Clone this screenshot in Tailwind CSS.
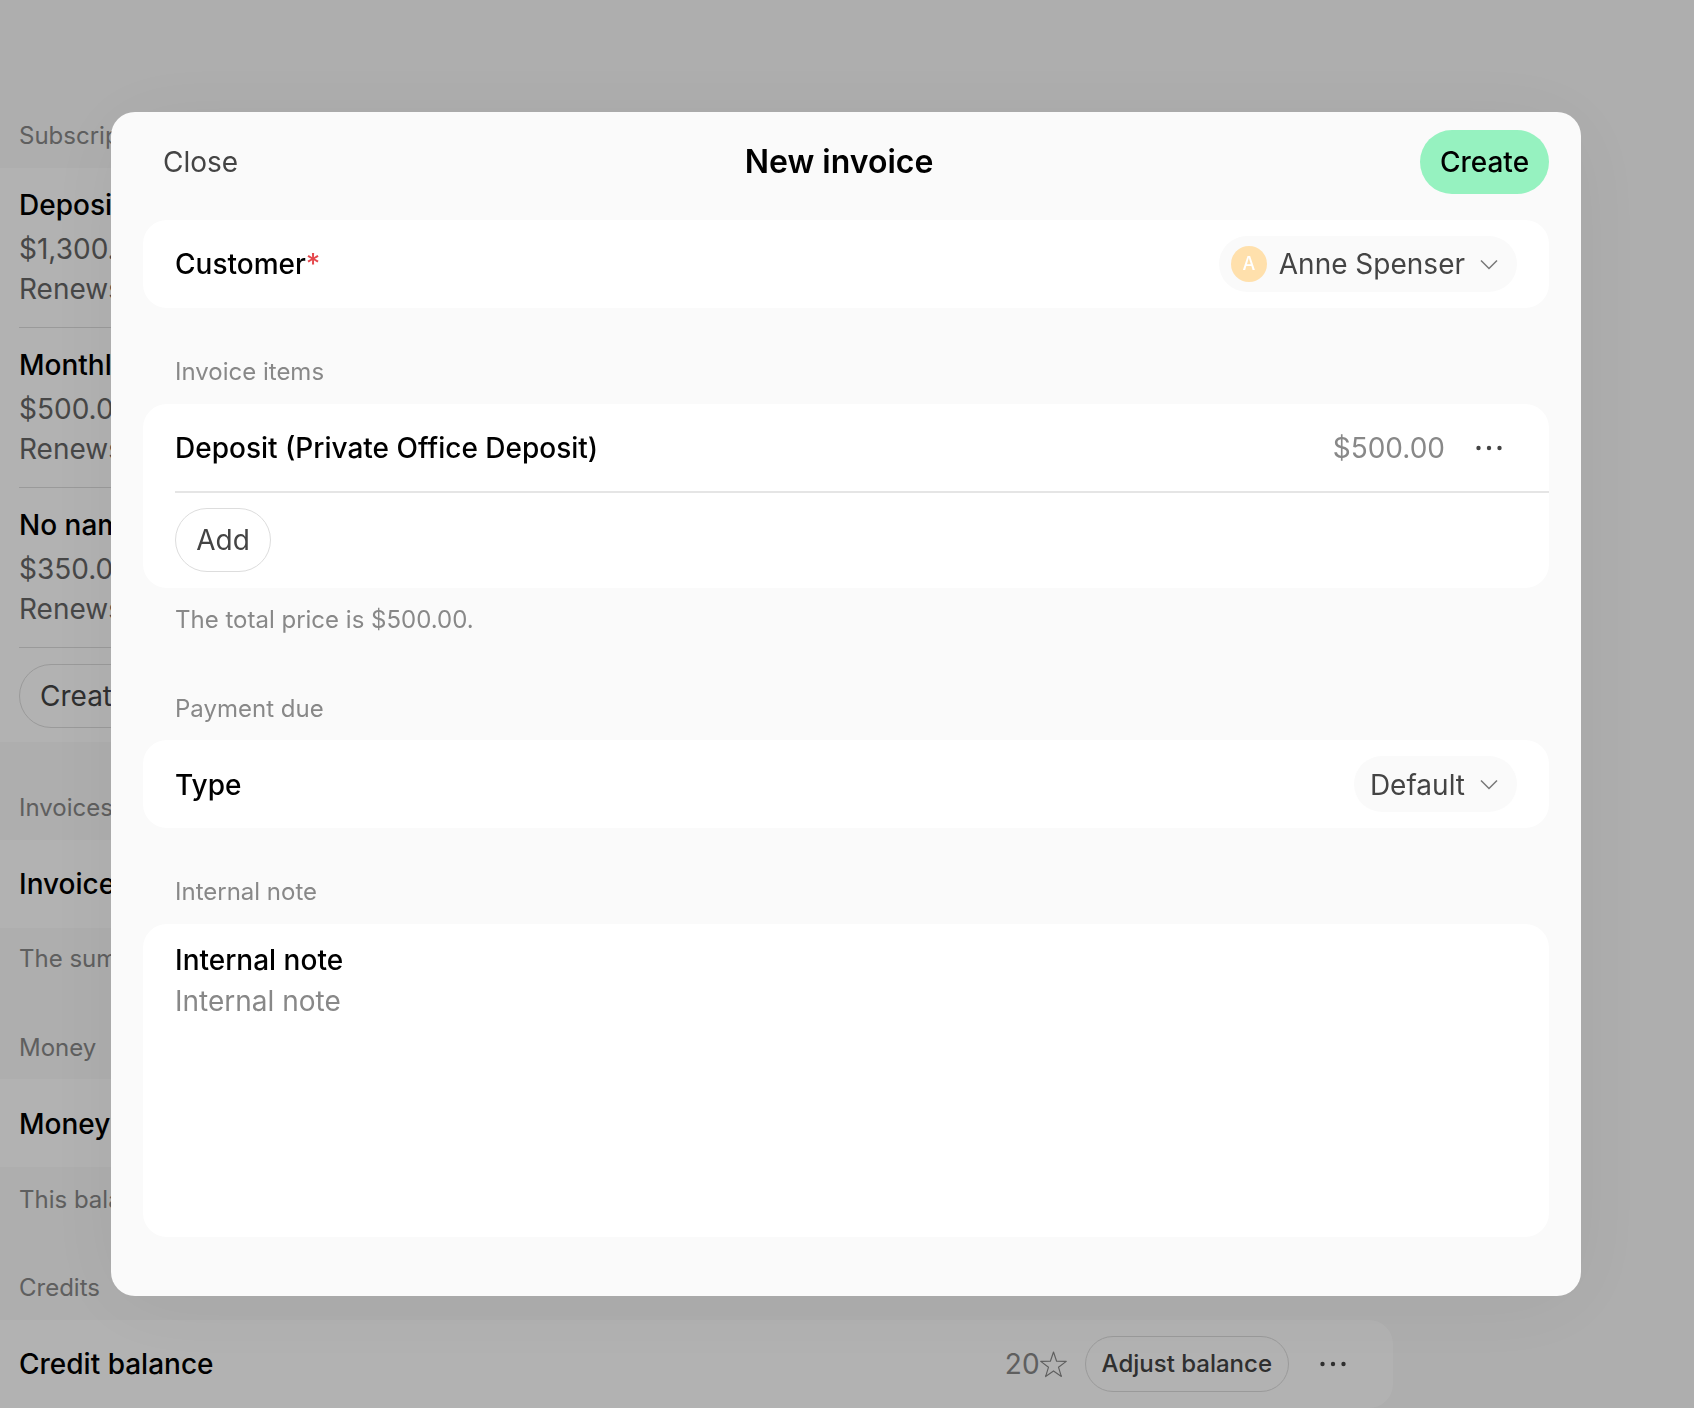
<!DOCTYPE html>
<html lang="en">
<head>
<meta charset="utf-8">
<title>New invoice</title>
<script src="https://cdn.jsdelivr.net/npm/@tailwindcss/browser@4"></script>
</head>
<body class="m-0 h-[1408px] overflow-hidden bg-[#f9f9f9] font-[Inter,sans-serif] text-[28px] leading-[40px] text-black">
<main class="w-[1393px] pt-[116px]">
  <h2 class="pl-[19px] text-[24px] leading-[40px] text-[#888]">Subscriptions</h2>
  <section class="mt-[12px] flex h-[574px] flex-col rounded-r-[24px] bg-white pl-[19px]">
    <div class="flex h-[160px] flex-col justify-end border-b border-[#ddd] pb-[18px]">
      <div class="mb-[4px] font-medium">Deposit</div><div class="text-[#666]">$1,300.00</div><div class="text-[#666]">Renews on the 1st</div>
    </div>
    <div class="flex h-[160px] flex-col justify-end border-b border-[#ddd] pb-[18px]">
      <div class="mb-[4px] font-medium">Monthly</div><div class="text-[#666]">$500.00</div><div class="text-[#666]">Renews on the 1st</div>
    </div>
    <div class="flex h-[160px] flex-col justify-end border-b border-[#ddd] pb-[18px]">
      <div class="mb-[4px] font-medium">No name</div><div class="text-[#666]">$350.00</div><div class="text-[#666]">Renews on the 1st</div>
    </div>
    <div class="mt-[16px]"><button class="h-[64px] rounded-full border border-[#ddd] px-[20px] text-[#444]">Create subscription</button></div>
  </section>
  <h2 class="mt-[46px] pl-[19px] text-[24px] leading-[40px] text-[#888]">Invoices</h2>
  <section class="mt-[12px] flex h-[88px] items-center rounded-r-[24px] bg-white pl-[19px] font-medium">Invoices</section>
  <p class="mt-[11px] pl-[19px] text-[24px] leading-[40px] text-[#888]">The sum of all invoices</p>
  <h2 class="mt-[49px] pl-[19px] text-[24px] leading-[40px] text-[#888]">Money</h2>
  <section class="mt-[11px] flex h-[88px] items-center rounded-r-[24px] bg-white pl-[19px] pt-[2px] font-medium">Money balance</section>
  <p class="mt-[13px] pl-[19px] text-[24px] leading-[40px] text-[#888]">This balance is available</p>
  <h2 class="mt-[48px] pl-[19px] text-[24px] leading-[40px] text-[#888]">Credits</h2>
  <section class="mt-[12px] flex h-[88px] items-center justify-between rounded-r-[24px] bg-white pl-[19px]">
    <span class="font-medium">Credit balance</span>
    <div class="flex items-center pr-[46px]">
      <span class="text-[#888]">20</span>
      <svg class="h-[27px] w-[27px] text-[#888]" viewBox="0 0 26 26" fill="none" stroke="currentColor" stroke-width="1.1" stroke-linejoin="round"><path d="M13 1l3 8.9 9.3.1-7.5 5.6 2.8 9L13 19.2 5.4 24.6l2.8-9L.7 10l9.3-.1z"/></svg>
      <button class="ml-[18px] h-[56px] rounded-full border border-[#ddd] px-[16px] text-[24px] font-medium text-[#444]">Adjust balance</button>
      <svg class="ml-[30px] h-[28px] w-[28px] text-[#444]" viewBox="0 0 28 28" fill="currentColor"><circle cx="3.5" cy="14" r="2.2"/><circle cx="14" cy="14" r="2.2"/><circle cx="24.5" cy="14" r="2.2"/></svg>
    </div>
  </section>
</main>

<div class="fixed inset-0 bg-black/30"></div>

<div role="dialog" class="fixed left-[111px] top-[112px] flex h-[1184px] w-[1470px] flex-col rounded-[24px] bg-[#fafafa] px-[32px] pt-[18px] shadow-[0_8px_90px_rgba(0,0,0,0.06)]">
  <header class="flex h-[64px] items-center justify-between">
    <button class="h-[64px] w-[115px] px-[20px] text-left text-[#444]">Close</button>
    <h1 class="text-[32px] font-semibold">New invoice</h1>
    <button class="h-[64px] w-[129px] rounded-full bg-[#96f2c0] font-medium">Create</button>
  </header>

  <section class="mt-[26px] flex h-[88px] items-center justify-between rounded-[24px] bg-white pl-[32px] pr-[32px]">
    <div class="font-medium">Customer<span class="text-[#e5484d]">*</span></div>
    <button class="flex h-[56px] items-center rounded-full bg-[#fafafa] pl-[12px] pr-[18px] text-[#444]">
      <span class="flex h-[36px] w-[36px] items-center justify-center rounded-full bg-[#ffe0ac] text-[18px] font-medium text-white">A</span>
      <span class="ml-[12px]">Anne Spenser</span>
      <svg class="ml-[14px] h-[20px] w-[20px] text-[#777]" viewBox="0 0 20 20" fill="none" stroke="currentColor" stroke-width="1.5"><path d="M2 6.5l8 8 8-8"/></svg>
    </button>
  </section>

  <h2 class="mt-[44px] pl-[32px] text-[24px] leading-[40px] text-[#888]">Invoice items</h2>
  <section class="mt-[12px] h-[184px] rounded-[24px] bg-white pl-[32px]">
    <div class="flex h-[89px] items-center justify-between border-b-2 border-[#e5e5e5] pr-[32px]">
      <span class="font-medium">Deposit (Private Office Deposit)</span>
      <div class="flex items-center">
        <span class="text-[#888]">$500.00</span>
        <svg class="ml-[30px] mr-[14px] h-[28px] w-[28px] text-[#444]" viewBox="0 0 28 28" fill="currentColor"><circle cx="3.5" cy="14" r="2.2"/><circle cx="14" cy="14" r="2.2"/><circle cx="24.5" cy="14" r="2.2"/></svg>
      </div>
    </div>
    <div class="pt-[15px]"><button class="h-[64px] w-[96px] rounded-full border border-[#ddd] text-[#444]">Add</button></div>
  </section>
  <p class="mt-[12px] pl-[32px] text-[24px] leading-[40px] text-[#888]">The total price is $500.00.</p>

  <h2 class="mt-[49px] pl-[32px] text-[24px] leading-[40px] text-[#888]">Payment due</h2>
  <section class="mt-[11px] flex h-[88px] items-center justify-between rounded-[24px] bg-white px-[32px]">
    <div class="pt-[1px] font-medium">Type</div>
    <button class="flex h-[56px] items-center rounded-full bg-[#fafafa] pl-[16px] pr-[18px] text-[#444]">
      <span class="pt-[1px]">Default</span>
      <svg class="ml-[14px] h-[20px] w-[20px] text-[#777]" viewBox="0 0 20 20" fill="none" stroke="currentColor" stroke-width="1.5"><path d="M2 6.5l8 8 8-8"/></svg>
    </button>
  </section>

  <h2 class="mt-[44px] pl-[32px] text-[24px] leading-[40px] text-[#888]">Internal note</h2>
  <section class="mt-[12px] h-[313px] rounded-[24px] bg-white px-[32px] pt-[16px]">
    <div class="mb-[1px] font-medium">Internal note</div>
    <div class="text-[#888]">Internal note</div>
  </section>
</div>
</body>
</html>
